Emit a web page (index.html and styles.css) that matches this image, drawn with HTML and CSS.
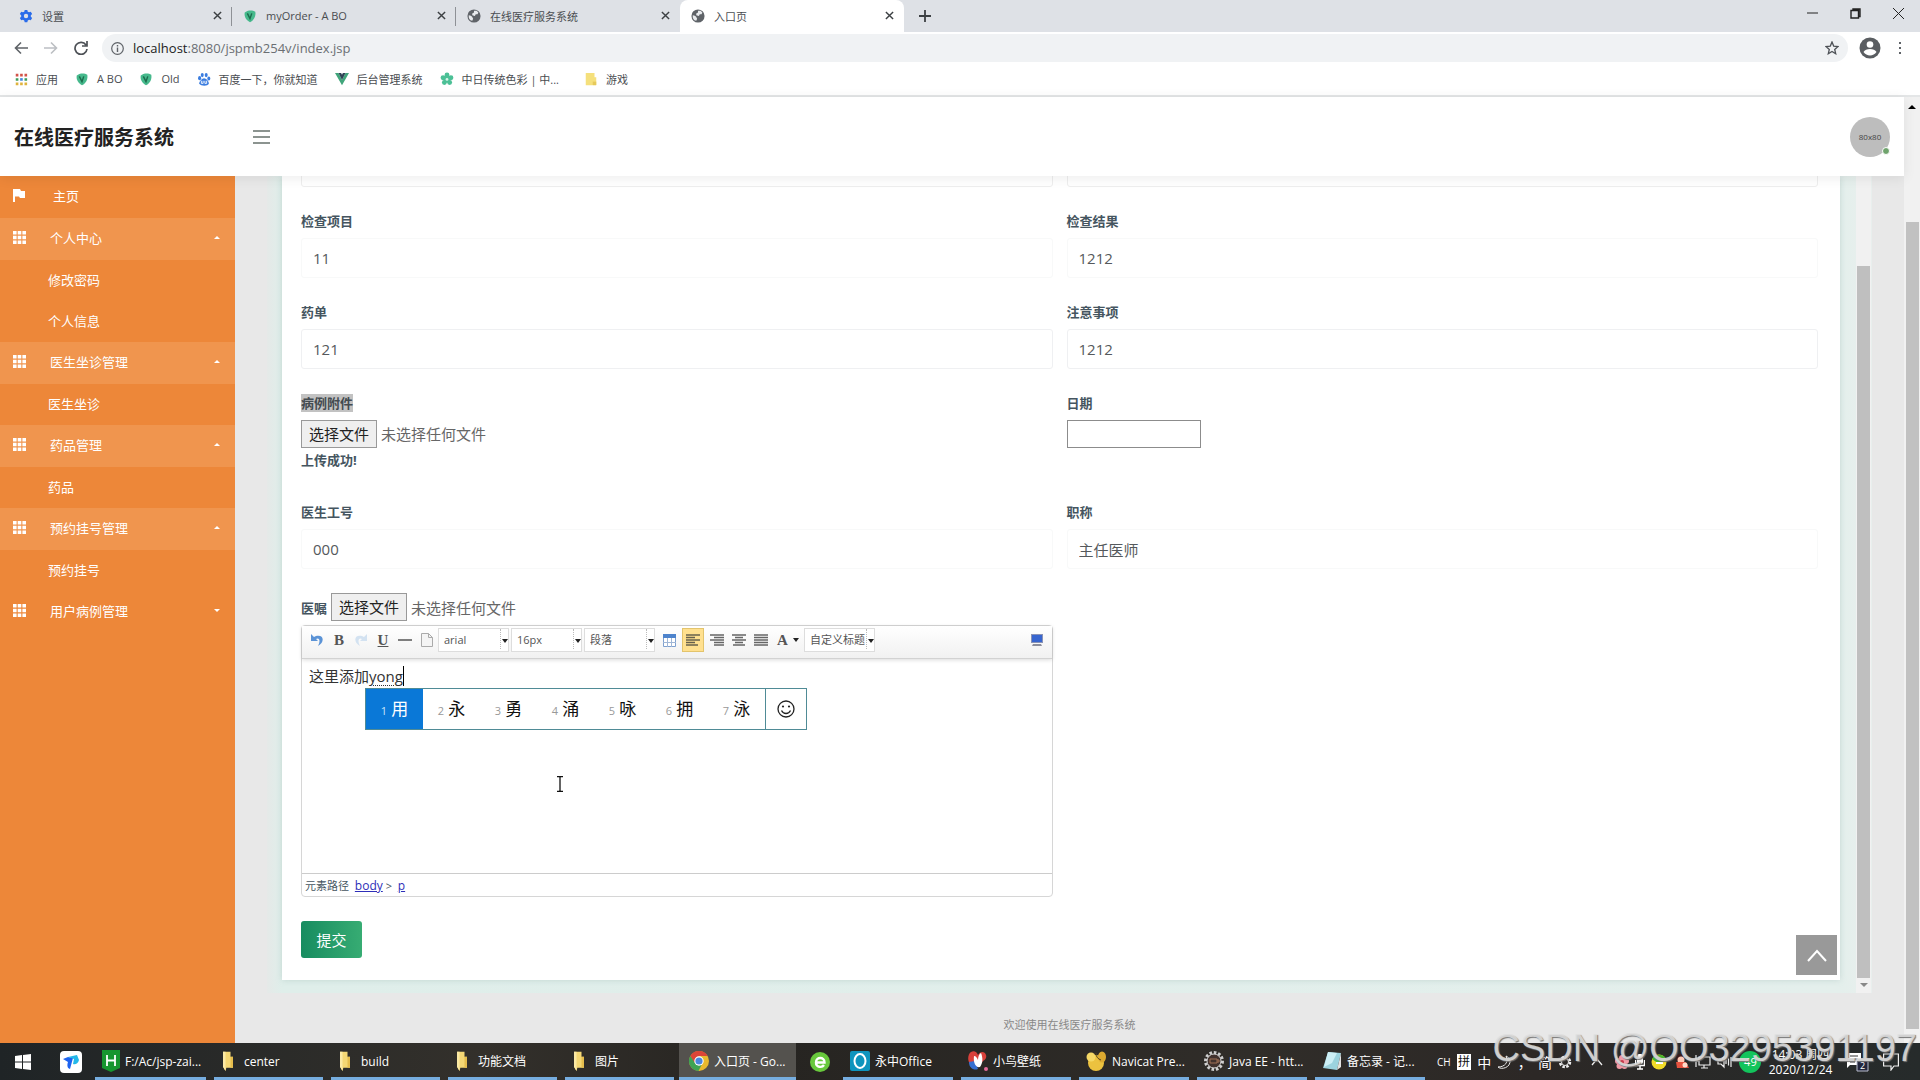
FILE: index.html
```html
<!DOCTYPE html>
<html lang="zh-CN">
<head>
<meta charset="utf-8">
<title>入口页</title>
<link rel="stylesheet" href="styles.css">
</head>
<body>
<svg class="defs" aria-hidden="true">
  <symbol id="x" viewBox="0 0 10 10"><path d="M1 1l8 8M9 1l-8 8" stroke="#3c4043" stroke-width="1.6"/></symbol>
  <symbol id="globe" viewBox="0 0 16 16"><circle cx="8" cy="8" r="7.5" fill="#5f6368"/><path d="M2 7c2 0 3 1 4 2l1 2-1 2.500C3 13 1.500 10 2 7zM8 2l3 0 2 2-1 2-2 0-1 2-3-1 0-2 2-1z" fill="#e8eaed"/></symbol>
  <symbol id="leaf" viewBox="0 0 16 16"><path d="M2 4c3-3 9-3 12-1 1 4-1 10-6 12C4 13 1 9 2 4z" fill="#46b98c"/><path d="M5 5l3 6 2-6" stroke="#1c6b4c" stroke-width="1.600" fill="none"/></symbol>
  <symbol id="grid" viewBox="0 0 13 13"><path d="M0 0h3.600v3.600H0zM4.700 0h3.600v3.600H4.700zM9.400 0H13v3.600H9.400zM0 4.700h3.600v3.600H0zM4.700 4.700h3.600v3.600H4.700zM9.400 4.700H13v3.600H9.400zM0 9.400h3.600V13H0zM4.700 9.400h3.600V13H4.700zM9.400 9.400H13V13H9.400z" fill="#fff"/></symbol>
  <symbol id="folder" viewBox="0 0 14 24"><path d="M1 1h9v6h3v13H5l-1 4-3-5z" fill="#f4d774"/><path d="M1 1h3v23l-3-5z" fill="#fbe9a4"/><path d="M10 7h3v13h-3z" fill="#e5bd4d"/></symbol>
  <symbol id="up" viewBox="0 0 8 4"><path d="M0 4l4-4 4 4z"/></symbol>
</svg>

<header class="chrome">
  <nav class="tabs">
    <div class="tab"><svg class="ico" viewBox="0 0 16 16"><path d="M6.500 1h3l.5 2 1.500.8 2-.6 1.500 2.600L13.500 7.200v1.600L15 10.200l-1.500 2.600-2-.6L10 13l-.5 2h-3L6 13l-1.500-.8-2 .6L1 10.200l1.500-1.400V7.200L1 5.800l1.500-2.600 2 .6L6 3z" fill="#2a6cea"/><circle cx="8" cy="8" r="2.500" fill="#dee1e6"/></svg><span>设置</span><button aria-label="关闭"><svg width="9" height="9"><use href="#x"/></svg></button></div>
    <div class="tab"><svg class="ico"><use href="#leaf"/></svg><span>myOrder - A BO</span><button aria-label="关闭"><svg width="9" height="9"><use href="#x"/></svg></button></div>
    <div class="tab"><svg class="ico"><use href="#globe"/></svg><span>在线医疗服务系统</span><button aria-label="关闭"><svg width="9" height="9"><use href="#x"/></svg></button></div>
    <div class="tab active"><svg class="ico"><use href="#globe"/></svg><span>入口页</span><button aria-label="关闭"><svg width="9" height="9"><use href="#x"/></svg></button></div>
    <button class="new-tab" aria-label="新标签页"><svg width="12" height="12" viewBox="0 0 12 12"><path d="M6 0v12M0 6h12" stroke="#3c4043" stroke-width="1.800"/></svg></button>
    <div class="win-controls">
      <button aria-label="最小化"><svg width="11" height="11" viewBox="0 0 11 11"><path d="M0 5h11" stroke="#222"/></svg></button>
      <button aria-label="还原"><svg width="11" height="11" viewBox="0 0 11 11"><path d="M1 2.500h7.500V10H1zM3 2.500V1h7v7.500H8.500" fill="none" stroke="#222" stroke-width="1.400"/></svg></button>
      <button aria-label="关闭窗口"><svg width="11" height="11" viewBox="0 0 11 11"><path d="M0 0l11 11M11 0L0 11" stroke="#222"/></svg></button>
    </div>
  </nav>
  <div class="toolbar">
    <button aria-label="后退"><svg width="14" height="14" viewBox="0 0 14 14"><path d="M14 7H2M7 1.500L1.500 7 7 12.500" fill="none" stroke="#5f6368" stroke-width="1.600"/></svg></button>
    <button aria-label="前进"><svg width="14" height="14" viewBox="0 0 14 14"><path d="M0 7h12M7 1.500L12.500 7 7 12.500" fill="none" stroke="#bcbfc3" stroke-width="1.600"/></svg></button>
    <button aria-label="刷新"><svg width="14" height="14" viewBox="0 0 14 14"><path d="M12 4A6 6 0 1 0 13 8M13 0v5H8" fill="none" stroke="#4d5156" stroke-width="1.700"/></svg></button>
    <label class="address">
      <svg width="13" height="13" viewBox="0 0 13 13"><circle cx="6.500" cy="6.500" r="5.800" fill="none" stroke="#5f6368" stroke-width="1.200"/><path d="M6.500 5.500V10M6.500 3v1.400" stroke="#5f6368" stroke-width="1.400"/></svg>
      <span><b>localhost</b>:8080/jspmb254v/index.jsp</span>
      <svg class="star" width="14" height="14" viewBox="0 0 14 14"><path d="M7 1l1.700 4.100 4.300.4-3.300 2.900 1 4.300L7 10.400l-3.700 2.300 1-4.300L1 5.500l4.300-.4z" fill="none" stroke="#4d5156" stroke-width="1.300"/></svg>
    </label>
    <button class="profile" aria-label="用户"><svg width="22" height="22" viewBox="0 0 22 22"><circle cx="11" cy="11" r="10.500" fill="#5a5d61"/><circle cx="11" cy="7.500" r="3.300" fill="#fff"/><path d="M4.500 15c2-4 11-4 13 0-3 4.500-10 4.500-13 0z" fill="#fff"/></svg></button>
    <button class="more" aria-label="更多"><svg width="4" height="14" viewBox="0 0 4 14"><path d="M1 1h2v2H1zM1 6h2v2H1zM1 11h2v2H1z" fill="#5f6368"/></svg></button>
  </div>
  <nav class="bookmarks">
    <a href="#"><svg class="ico" viewBox="0 0 16 16"><path d="M2 2h3v3H2zM7 2h3v3H7zM12 2h3v3h-3z" fill="#d3544a"/><path d="M2 7h3v3H2zM12 7h3v3h-3z" fill="#3c9d5c"/><path d="M7 7h3v3H7z" fill="#4387e0"/><path d="M2 12h3v3H2zM7 12h3v3H7zM12 12h3v3h-3z" fill="#dfb33d"/></svg>应用</a>
    <a href="#"><svg class="ico"><use href="#leaf"/></svg>A BO</a>
    <a href="#"><svg class="ico"><use href="#leaf"/></svg>Old</a>
    <a href="#"><svg class="ico" viewBox="0 0 16 16"><g fill="#3b7de0"><ellipse cx="3" cy="7" rx="1.800" ry="2.300"/><ellipse cx="6" cy="3.500" rx="1.700" ry="2.400"/><ellipse cx="10.500" cy="3.500" rx="1.700" ry="2.400"/><ellipse cx="13.500" cy="7.500" rx="1.700" ry="2.300"/><path d="M8 7c2.500 0 6 4 5.500 6.500-1 3-9 3-11 0C2 11 6 7 8 7z"/></g><path d="M5 10v3h2v-3M9 10v3h2v-3" stroke="#fff" fill="none"/></svg>百度一下，你就知道</a>
    <a href="#"><svg class="ico" viewBox="0 0 16 16"><path d="M0 1h4l4 8 4-8h4L8 15z" fill="#41a57b"/><path d="M4 1h3l1 2 1-2h3L8 9z" fill="#2f4456"/></svg>后台管理系统</a>
    <a href="#"><svg class="ico" viewBox="0 0 16 16"><g fill="#4cc096"><circle cx="8" cy="3.500" r="2.800"/><circle cx="3.500" cy="6.500" r="2.800"/><circle cx="12.500" cy="6.500" r="2.800"/><circle cx="5" cy="12" r="2.800"/><circle cx="11" cy="12" r="2.800"/><circle cx="8" cy="8" r="4"/></g><circle cx="8" cy="8.500" r="1.600" fill="#d7f3e8"/></svg>中日传统色彩 | 中...</a>
    <a href="#" class="apart"><svg class="ico" viewBox="0 0 16 16"><path d="M2 1h10v5h2v9H2z" fill="#f5e07c"/><path d="M10 11h4v4h-4z" fill="#e6c95a"/></svg>游戏</a>
  </nav>
</header>

<div class="viewport">
  <div class="page">
    <header class="app-head">
      <h1>在线医疗服务系统</h1>
      <button class="burger" aria-label="菜单"><i></i><i></i><i></i></button>
      <div class="avatar">80x80<span class="status"></span></div>
    </header>
    <div class="app-body">
      <nav class="side">
        <a class="home" href="#"><svg width="12" height="13" viewBox="0 0 12 13"><path d="M0 0h7l1 2h4v7H7L6 7.500H2V13H0z" fill="#fff"/></svg>主页</a>
        <a class="head" href="#"><svg width="13" height="13"><use href="#grid"/></svg>个人中心<svg class="caret" width="6" height="3"><use href="#up"/></svg></a>
        <a href="#">修改密码</a>
        <a href="#">个人信息</a>
        <a class="head" href="#"><svg width="13" height="13"><use href="#grid"/></svg>医生坐诊管理<svg class="caret" width="6" height="3"><use href="#up"/></svg></a>
        <a href="#">医生坐诊</a>
        <a class="head" href="#"><svg width="13" height="13"><use href="#grid"/></svg>药品管理<svg class="caret" width="6" height="3"><use href="#up"/></svg></a>
        <a href="#">药品</a>
        <a class="head" href="#"><svg width="13" height="13"><use href="#grid"/></svg>预约挂号管理<svg class="caret" width="6" height="3"><use href="#up"/></svg></a>
        <a href="#">预约挂号</a>
        <a class="head closed" href="#"><svg width="13" height="13"><use href="#grid"/></svg>用户病例管理<svg class="caret" width="6" height="3"><use href="#up"/></svg></a>
      </nav>
      <main class="main">
        <div class="scroller">
          <form class="card">
            <div class="fields">
              <div class="field first"><input class="text" aria-label="上一项"></div>
              <div class="field first"><input class="text" aria-label="上一项结果"></div>
              <div class="field"><label for="f1">检查项目</label><input class="text" id="f1" value="11"></div>
              <div class="field"><label for="f2">检查结果</label><input class="text" id="f2" value="1212"></div>
              <div class="field"><label for="f3">药单</label><input class="text clear" id="f3" value="121"></div>
              <div class="field"><label for="f4">注意事项</label><input class="text clear" id="f4" value="1212"></div>
              <div class="field upload"><label for="f5"><mark>病例附件</mark></label>
                <label class="file"><input type="file" id="f5"><span class="pick">选择文件</span><span>未选择任何文件</span></label>
                <strong>上传成功!</strong></div>
              <div class="field"><label for="f6">日期</label><input class="date" id="f6"></div>
              <div class="field"><label for="f7">医生工号</label><input class="text" id="f7" value="000"></div>
              <div class="field"><label for="f8">职称</label><input class="text" id="f8" value="主任医师"></div>
              <div class="field">
                <div class="advice"><label for="f9">医嘱</label><label class="file"><input type="file" id="f9"><span class="pick">选择文件</span><span>未选择任何文件</span></label></div>
                <div class="editor">
                  <div class="ed-bar">
                    <button type="button" aria-label="撤销"><svg width="14" height="14" viewBox="0 0 14 14"><path d="M1 1v7h7L6 6c3-2 5 1 2 7 7-4 6-12-2-10L4 4z" fill="#5b93d6"/></svg></button>
                    <button type="button" class="serif">B</button>
                    <button type="button" aria-label="重做"><svg width="14" height="14" viewBox="0 0 14 14"><path d="M13 1v7H6l2-2C5 4 3 7 6 13-1 9 0 1 8 3l2 1z" fill="#d3e2f1"/></svg></button>
                    <button type="button" class="serif"><u>U</u></button>
                    <button type="button" aria-label="分隔线"><svg width="14" height="14" viewBox="0 0 14 14"><path d="M0 7h14" stroke="#555" stroke-width="1.500"/></svg></button>
                    <button type="button" aria-label="新建"><svg width="12" height="14" viewBox="0 0 12 14"><path d="M.5.500h7l4 4v9H.5z" fill="#f4f4f4" stroke="#aaa"/><path d="M7.500.500v4h4" fill="none" stroke="#aaa"/></svg></button>
                    <span class="sel"><select aria-label="字体"><option>arial</option></select></span>
                    <span class="sel"><select aria-label="字号"><option>16px</option></select></span>
                    <span class="sel"><select aria-label="段落格式"><option>段落</option></select></span>
                    <button type="button" class="wide" aria-label="表格"><svg width="13" height="13" viewBox="0 0 13 13"><path d="M.5.500h12v12H.5z" fill="#fff" stroke="#7ea0cf"/><path d="M0 0h13v4H0z" fill="#4d83cc"/><path d="M4.500 4v9M8.500 4v9M0 8.500h13" stroke="#9fb6d6"/></svg></button>
                    <button type="button" class="on" aria-label="左对齐"><svg width="14" height="12" viewBox="0 0 14 12"><path d="M0 1h14M0 3.500h9M0 6h14M0 8.500h9M0 11h12" stroke="#68614c" stroke-width="1.500"/></svg></button>
                    <button type="button" aria-label="右对齐"><svg width="14" height="12" viewBox="0 0 14 12"><path d="M0 1h14M4 3.500h10M0 6h14M4 8.500h10M4 11h10" stroke="#666" stroke-width="1.500"/></svg></button>
                    <button type="button" aria-label="居中"><svg width="14" height="12" viewBox="0 0 14 12"><path d="M0 1h14M3 3.500h8M0 6h14M3 8.500h8M1 11h12" stroke="#666" stroke-width="1.500"/></svg></button>
                    <button type="button" aria-label="两端对齐"><svg width="14" height="12" viewBox="0 0 14 12"><path d="M0 1h14M0 3.500h14M0 6h14M0 8.500h14M0 11h14" stroke="#666" stroke-width="1.500"/></svg></button>
                    <button type="button" class="serif color">A<i class="tri"></i></button>
                    <span class="sel"><select aria-label="自定义标题"><option>自定义标题</option></select></span>
                    <button type="button" class="full" aria-label="全屏"><svg width="14" height="13" viewBox="0 0 14 13"><path d="M1 0h12v9H1z" fill="#8a93b5"/><path d="M2 1h10v7H2z" fill="#3765cf"/><path d="M3 10h8l1 2H2z" fill="#8d8f9c"/></svg></button>
                  </div>
                  <div class="ed-text" contenteditable="true" role="textbox" aria-label="医嘱内容">这里添加<span class="typing">yong</span></div>
                  <div class="ed-path">元素路径 <a href="#">body</a> &gt; <a href="#">p</a></div>
                  <ol class="ime">
                    <li class="cur"><small>1</small>用</li><li><small>2</small>永</li><li><small>3</small>勇</li><li><small>4</small>涌</li><li><small>5</small>咏</li><li><small>6</small>拥</li><li><small>7</small>泳</li>
                    <li class="smile"><svg width="18" height="18" viewBox="0 0 18 18"><circle cx="9" cy="9" r="8" fill="none" stroke="#222" stroke-width="1.300"/><circle cx="6" cy="6.500" r="1.100" fill="#222"/><circle cx="12" cy="6.500" r="1.100" fill="#222"/><path d="M4.500 10.500c2 4 7 4 9 0" fill="none" stroke="#222" stroke-width="1.300"/></svg></li>
                  </ol>
                  <svg class="pointer" width="8" height="16" viewBox="0 0 8 16"><path d="M1 .700h2.500L4 1.500l.5-.8H7M4 1v14M1 15.300h2.500l.5-.8.500.8H7" fill="none" stroke="#111" stroke-width="1.300"/></svg>
                </div>
              </div>
            </div>
            <button class="submit" type="button">提交</button>
          </form>
          <div class="track inner"><span class="thumb"></span><svg width="8" height="4" class="down"><use href="#up"/></svg></div>
          <button class="top" type="button" aria-label="回到顶部"><svg width="20" height="13" viewBox="0 0 20 13"><path d="M1 12l9-10 9 10" fill="none" stroke="#fff" stroke-width="2"/></svg></button>
        </div>
        <footer class="foot">欢迎使用在线医疗服务系统</footer>
      </main>
    </div>
  </div>
  <div class="track outer"><svg width="8" height="4"><use href="#up"/></svg><span class="thumb"></span></div>
</div>

<footer class="taskbar">
  <button class="pin" aria-label="开始"><svg width="16" height="16" viewBox="0 0 16 16"><path d="M0 2l7-1v6.500H0zM8 1l8-1v7.500H8zM0 8.500h7V15l-7-1zM8 8.500h8V16l-8-1z" fill="#fff"/></svg></button>
  <button class="pin second" aria-label="应用"><svg width="22" height="22" viewBox="0 0 22 22"><rect width="22" height="22" rx="4" fill="#fff"/><path d="M3 8l5-2 5 1-3 11c-3-1-3-4-2-7z" fill="#1d63f0"/><path d="M8 6l9-2 2 5c-1 4-4 5-6 4l1-5z" fill="#23b8e9"/></svg></button>
  <button class="task"><svg width="18" height="22" viewBox="0 0 18 22"><path d="M0 0h18v18l-9 4-9-4z" fill="#17962f"/><path d="M5 5v11M13 5v11M5 10.500h8" stroke="#fff" stroke-width="1.800"/></svg>F:/Ac/jsp-zai...</button>
  <button class="task dir"><svg width="14" height="20"><use href="#folder"/></svg>center</button>
  <button class="task dir"><svg width="14" height="20"><use href="#folder"/></svg>build</button>
  <button class="task dir"><svg width="14" height="20"><use href="#folder"/></svg>功能文档</button>
  <button class="task dir"><svg width="14" height="20"><use href="#folder"/></svg>图片</button>
  <button class="task live"><svg width="20" height="20" viewBox="0 0 20 20"><circle cx="10" cy="10" r="10" fill="#e9b92e"/><path d="M1.300 5A10 10 0 0 1 18.700 5H10l-5 7z" fill="#dc4538"/><path d="M1.300 5a10 10 0 0 0 8.200 15l4-8H6z" fill="#3ea354"/><circle cx="10" cy="10" r="4.700" fill="#fff"/><circle cx="10" cy="10" r="3.600" fill="#4a86dd"/></svg>入口页 - Go...</button>
  <button class="pin third" aria-label="浏览器"><svg width="20" height="20" viewBox="0 0 20 20"><circle cx="10" cy="10" r="10" fill="#68c83c"/><path d="M5.500 10.500h9c0-6-8.500-6-8.500 0 0 5 6 5.500 8 2.500" fill="none" stroke="#fff" stroke-width="2.400"/></svg></button>
  <button class="task app"><svg width="20" height="20" viewBox="0 0 20 20"><rect width="20" height="20" rx="2" fill="#0e94bd"/><ellipse cx="10" cy="10" rx="5.500" ry="7" fill="none" stroke="#fff" stroke-width="2"/></svg>永中Office</button>
  <button class="task app"><svg width="20" height="20" viewBox="0 0 20 20"><path d="M3 1c3-2 6 0 7 3 2-4 7-4 8 0 1 3-1 5-3 6l-5 6-8-3C-1 9 0 3 3 1z" fill="#d9413b"/><path d="M1 11l6-1 3 8c-4 2-9-1-9-7z" fill="#376fd0"/><path d="M6 5c2 0 3 2 4 4 0-3 1-6 3-7 2 5 2 10-1 14-4 1-7-4-6-11z" fill="#fff"/><circle cx="18" cy="18" r="2" fill="#e46b9b"/></svg>小鸟壁纸</button>
  <button class="task app"><svg width="21" height="20" viewBox="0 0 21 20"><circle cx="10" cy="12" r="8" fill="#ecc23f"/><circle cx="5" cy="6" r="4.500" fill="#f5d866"/><ellipse cx="16" cy="6" rx="4" ry="5.500" fill="#dca930"/><path d="M10 2c0 4 2 6 5 7" stroke="#51431f" stroke-width="1" fill="none"/></svg>Navicat Pre...</button>
  <button class="task app"><svg width="20" height="20" viewBox="0 0 20 20"><circle cx="10" cy="10" r="8.500" fill="none" stroke="#cfcfcf" stroke-width="3" stroke-dasharray="2.600 1.800"/><circle cx="10" cy="10" r="7" fill="#41322e" stroke="#d5d5d5"/><path d="M6 8h7v4H6zM13 9h2v2h-2" fill="none" stroke="#a07055"/></svg>Java EE - htt...</button>
  <button class="task app"><svg width="20" height="20" viewBox="0 0 20 20"><path d="M6 1l13 1-4 17L1 17z" fill="#9cd3de"/><path d="M6 1l9 1-5 10-8 4z" fill="#cdeff5"/><path d="M15 19l4-17v14z" fill="#e2e2e2"/></svg>备忘录 - 记...</button>
  <div class="tray">
    <span class="tiny">CH</span><span class="pin-yin">拼</span><span>中</span>
    <svg width="14" height="14" viewBox="0 0 14 14"><path d="M9 1c3 6-1 11-8 11 3 3 13 1 12-7-1-2-2-3-4-4z" fill="none" stroke="#eee"/></svg>
    <span>，</span><span>简</span>
    <svg width="14" height="14" viewBox="0 0 14 14"><circle cx="7" cy="7" r="5" fill="none" stroke="#eee" stroke-width="2.500" stroke-dasharray="2.500 1.400"/><circle cx="7" cy="7" r="3.500" fill="none" stroke="#eee"/></svg>
    <svg class="wide-icon" width="12" height="8" viewBox="0 0 12 8"><path d="M1 7l5-6 5 6" fill="none" stroke="#eee" stroke-width="1.300"/></svg>
    <svg width="14" height="14" viewBox="0 0 14 14"><g fill="#f29aa5"><circle cx="7" cy="3" r="3"/><circle cx="3" cy="6" r="3"/><circle cx="11" cy="6" r="3"/><circle cx="4.500" cy="11" r="3"/><circle cx="9.500" cy="11" r="3"/></g><circle cx="7" cy="7" r="2" fill="#c9394f"/></svg>
    <svg width="10" height="16" viewBox="0 0 10 16"><rect x="2" width="6" height="10" rx="2" fill="#fff"/><path d="M.5 6v5.500h9V6M5 12v3M2 15h6" fill="none" stroke="#fff" stroke-width="1.500"/></svg>
    <svg width="16" height="16" viewBox="0 0 16 16"><circle cx="8" cy="8" r="7.500" fill="#f2dc28"/><path d="M1 5a8 8 0 0 1 14 0L8 10z" fill="#45b52e"/><path d="M5 8h7v2H5z" fill="#fff"/></svg>
    <svg width="15" height="15" viewBox="0 0 15 15"><circle cx="6" cy="4" r="4" fill="#3a1c1c"/><circle cx="7" cy="6" r="3.500" fill="#ffc8b4"/><path d="M2 8h10l3 6H3z" fill="#e6523f"/><circle cx="11" cy="11" r="2.500" fill="#ffdccc"/></svg>
    <svg width="16" height="14" viewBox="0 0 16 14"><path d="M4 2h11v8H4zM9 10v3M6 13h7M1 0v6h3M1 6v6" fill="none" stroke="#eee" stroke-width="1.200"/></svg>
    <svg width="16" height="14" viewBox="0 0 16 14"><path d="M1 5h3l3-3v10L4 9H1zM9 5v4M11.500 3.500v7M14 2v10" fill="none" stroke="#eee" stroke-width="1.200"/></svg>
    <span class="ball">49</span>
    <div class="clock"><span>14:03 周四</span><span>2020/12/24</span></div>
    <svg class="note" width="22" height="20" viewBox="0 0 22 20"><path d="M0 1h14v12l-11 0-3 3z" fill="#fff"/><path d="M3 4h8M3 7h8M3 10h5" stroke="#333"/><path d="M10 8h11v11H10z" fill="#23263c" stroke="#b9bccd"/><text x="13" y="17" font-size="9" fill="#fff">2</text></svg>
    <svg class="msg" width="16" height="18" viewBox="0 0 16 18"><path d="M.6 1h14.800v12H11l-3 4v-4H.6z" fill="none" stroke="#eee" stroke-width="1.200"/></svg>
  </div>
</footer>
<div class="watermark">CSDN @OO3295391197</div>
</body>
</html>
```
FILE: styles.css
```css
* { box-sizing: border-box; }
body {
  margin: 0;
  height: 100vh;
  display: flex;
  flex-direction: column;
  overflow: hidden;
  background: #e8e8e8;
  color: #455560;
  font-family: "Open Sans", "Noto Sans CJK SC", sans-serif;
  font-size: 13px;
}
a { color: inherit; text-decoration: none; }
button, input, select { font: inherit; color: inherit; }
button { border: 0; padding: 0; background: none; }
svg { display: block; flex: none; }
.defs { position: absolute; width: 0; height: 0; }
.ico { width: 14px; height: 14px; }

/* browser frame */
.chrome { flex: none; background: #fff; border-bottom: 2px solid #e4e6e7; color: #4a4d51; }
.tabs { display: flex; height: 32px; padding-left: 8px; background: #dee1e6; font-size: 11px; }
.tab { width: 224px; display: flex; align-items: center; gap: 9px; padding: 0 9px 1px 11px; border-right: 1px solid transparent; }
.tab:nth-child(-n+2) { border-image: linear-gradient(transparent 25%, #8e9196 25%, #8e9196 78%, transparent 78%) 1; }
.tab button { margin-left: auto; }
.tab.active { background: #fff; border-radius: 8px 8px 0 0; }
.new-tab { padding: 0 15px; }
.win-controls { display: flex; gap: 32px; margin-left: auto; padding: 0 16px 6px 0; align-items: center; }
.toolbar { display: flex; align-items: center; height: 32px; padding: 0 18px 0 14px; gap: 16px; }
.address { flex: 1; display: flex; align-items: center; gap: 9px; height: 28px; margin-left: -2px; padding: 0 9px; border-radius: 14px; background: #f0f2f4; font-size: 13px; color: #6b6f73; }
.address b { font-weight: 400; color: #222; }
.star { margin-left: auto; }
.profile { margin-left: -5px; }
.more { margin-left: 1px; }
.bookmarks { display: flex; align-items: center; height: 31px; padding: 0 14px 2px; gap: 17px; font-size: 11px; }
.bookmarks a { display: flex; align-items: center; gap: 8px; }
.bookmarks .apart { margin-left: 8px; }

/* page */
.viewport { flex: 1; min-height: 0; display: flex; }
.page { flex: 1; min-width: 0; display: flex; flex-direction: column; }
.app-head { position: relative; z-index: 2; display: flex; align-items: center; height: 79px; padding: 0 14px; background: #fff; box-shadow: 0 2px 12px rgba(0, 0, 0, .08); }
.app-head h1 { width: 239px; margin: 0; font-size: 20px; color: #222; }
.burger { display: grid; gap: 4px; }
.burger i { width: 17px; height: 2px; background: #8c9490; }
.avatar { position: relative; width: 40px; height: 40px; margin-left: auto; border-radius: 50%; background: #bdbdbd; color: #444; font-size: 8px; line-height: 40px; text-align: center; }
.status { position: absolute; right: 0; bottom: 2px; width: 8px; height: 8px; border: 1px solid #fff; border-radius: 50%; background: #6fa36c; }
.app-body { flex: 1; min-height: 0; display: flex; }

.side { flex: none; width: 235px; background: #ed8739; color: #fff; }
.side a { display: flex; align-items: center; height: 41px; padding: 0 15px 3px 48px; }
.side .home { height: 42px; padding-left: 13px; gap: 28px; }
.side .head { height: 42px; padding-left: 13px; gap: 24px; background: #f0954e; }
.side .closed { background: none; }
.caret { margin-left: auto; fill: #fff; }
.closed .caret { rotate: 180deg; }

.main { flex: 1; min-width: 0; display: flex; flex-direction: column; padding: 0 32px; }
.scroller { position: relative; flex: 1; min-height: 0; overflow: hidden; display: flex; padding: 0 0 13px 15px; background: linear-gradient(90deg, #e5e9e8, #dfeeea 15px, #e4efec 98%, #e8efed); }
.card { flex: 1; min-width: 0; padding: 0 22px 0 19px; background: #fff; box-shadow: 0 0 6px rgba(150, 180, 175, .4); }
.fields { display: grid; grid-template-columns: 1fr 1fr; gap: 24px 14px; }
.field { display: flex; flex-direction: column; min-width: 0; }
.first { margin-top: -29px; }
.field > label { height: 20px; margin-bottom: 7px; line-height: 20px; font-weight: 700; }
.text { height: 40px; width: 100%; padding: 0 11px; border: 1px solid #f8f9f9; border-radius: 3px; background: #fff; font-size: 15px; color: #55595c; }
.first .text { border-color: #eee; }
.clear { border-color: #eff0f2; }
mark { background: #c2c2c2; color: #444b50; }
.field > .file { height: 28px; margin: 0; font-weight: 400; }
.file { display: flex; align-items: center; gap: 4px; font-size: 15px; color: #666; }
.file input { position: absolute; width: 1px; height: 1px; opacity: 0; }
.pick { height: 28px; padding: 0 7px; border: 1px solid #999; background: #efefef; color: #222; line-height: 26px; }
.upload { padding-bottom: 8px; }
.upload strong { margin-top: 2px; line-height: 20px; }
.date { width: 134px; height: 28px; border: 1px solid #8c8c8c; background: #fff; }
.advice { display: flex; align-items: center; gap: 4px; margin-bottom: 4px; height: 28px; font-weight: 700; }
.advice .file { font-weight: 400; }

/* rich text editor */
.editor { position: relative; height: 272px; display: flex; flex-direction: column; border: 1px solid #d6d6d6; border-radius: 4px; }
.ed-bar { display: flex; align-items: center; height: 33px; padding: 0 4px 4px; background: linear-gradient(#fff, #f1f1f1); border-bottom: 1px solid #d2d2d2; box-shadow: 0 1px 4px rgba(0, 0, 0, .15); font-size: 11px; }
.ed-bar button { width: 22px; height: 24px; display: grid; place-items: center; flex: none; }
.ed-bar .wide { width: 25px; }
.ed-bar .on { border: 1px solid #e3c46c; background: #ffe08f; margin-right: 2px; }
.ed-bar .serif { font: 700 15px "Liberation Serif", serif; color: #555; }
.ed-bar .color { display: flex; align-items: center; justify-content: center; gap: 5px; width: 32px; }
.ed-bar .full { margin-left: auto; }
.tri, .sel::after { width: 0; height: 0; border: 3px solid transparent; border-top: 4px solid #222; border-bottom: 0; }
.sel { position: relative; width: 71px; height: 24px; margin-right: 2px; border: 1px solid #ddd; background: #fff; }
.sel::after { content: ""; position: absolute; right: 0; top: 10px; }
.sel select { appearance: none; width: 62px; height: 20px; padding: 0 0 0 5px; border: 0; border-right: 1px dotted #bbb; border-radius: 0; background: none; color: #555; text-overflow: clip; }
.ed-text { flex: 1; padding: 5px 7px; font-size: 15px; line-height: 24px; color: #333; outline: 0; }
.typing { border-right: 1px solid #000; text-decoration: underline dotted 1px; text-underline-offset: 3px; }
.ed-path { height: 23px; padding: 0 3px; border-top: 1px solid #ccc; font-size: 11px; line-height: 24px; }
.ed-path a { margin-left: 3px; color: #2e2eb8; font-size: 12px; text-decoration: underline; }
.ime { position: absolute; z-index: 3; left: 63px; top: 62px; display: flex; height: 42px; margin: 0; padding: 0; border: 1px solid #4f8b96; background: #fff; list-style: none; color: #111; font-size: 17px; line-height: 40px; }
.ime li { display: flex; justify-content: center; gap: 4px; width: 57px; }
.ime small { font-size: 11px; line-height: 44px; color: #999; }
.ime .cur { background: #0a78d7; color: #fff; }
.ime .cur small { color: #cde4f8; }
.ime .smile { width: 41px; align-items: center; border-left: 1px solid #4f8b96; }
.pointer { position: absolute; left: 254px; top: 150px; }
.submit { width: 61px; height: 37px; margin-top: 24px; border-radius: 3px; background: linear-gradient(90deg, #178c60, #37ac73); color: #fff; font-size: 15px; }
.top { position: absolute; right: 35px; bottom: 18px; width: 41px; height: 40px; display: grid; place-items: center; background: #999; }
.foot { height: 50px; padding-top: 23px; text-align: center; font-size: 11px; line-height: 18px; color: #888; }

/* scrollbars */
.track { flex: none; display: flex; flex-direction: column; align-items: center; background: #f1f1f1; }
.track .thumb { background: #c1c1c1; flex: 1; }
.inner { width: 15px; margin: 0 1px -13px 16px; padding-top: 90px; }
.inner .thumb { width: 13px; background: #bfbfbf; }
.down { rotate: 180deg; margin: 5px 0 6px; fill: #888; }
.outer { width: 16px; padding: 8px 0 14px; gap: 113px; }
.outer .thumb { width: 13px; }

/* taskbar */
.taskbar { flex: none; display: flex; height: 37px; background: linear-gradient(90deg, #1f2426, #33302b 25%, #262421 40%, #302d29 65%, #2c2826 80%, #262b2b); color: #fff; font-size: 12px; }
.pin { flex: none; width: 46px; display: grid; place-items: center; }
.second { width: 49px; }
.third { width: 47px; }
.task { flex: none; display: flex; align-items: center; gap: 5px; width: 111px; margin-right: 8px; padding: 2px 7px 0; border-bottom: 3px solid #76addf; white-space: nowrap; }
.dir { width: 109px; gap: 9px; }
.live { width: 117px; margin: 0 0 0 -3px; padding: 2px 10px 0; background: #54524e; }
.app { width: 110px; }
.tray { flex: 1; min-width: 0; display: flex; align-items: center; justify-content: space-between; padding: 0 21px 0 4px; white-space: nowrap; font-size: 14px; }
.tray .tiny { font-size: 10px; }
.pin-yin { background: #fff; color: #111; width: 14px; height: 16px; font-size: 12px; line-height: 15px; text-align: center; }
.wide-icon { margin: 0 6px 0 12px; }
.ball { width: 22px; height: 22px; border-radius: 50%; background: #12c45c; font-size: 11px; line-height: 22px; text-align: center; }
.clock { display: grid; margin: 0 8px 0 1px; text-align: center; font-size: 12px; line-height: 15px; }
.msg { margin-left: 8px; }
.watermark { position: absolute; z-index: 9; right: 3px; bottom: 12px; font: 38px/40px "Liberation Sans", sans-serif; color: rgba(225, 225, 225, .85); text-shadow: 1px 1px 1px #777; pointer-events: none; }
```
